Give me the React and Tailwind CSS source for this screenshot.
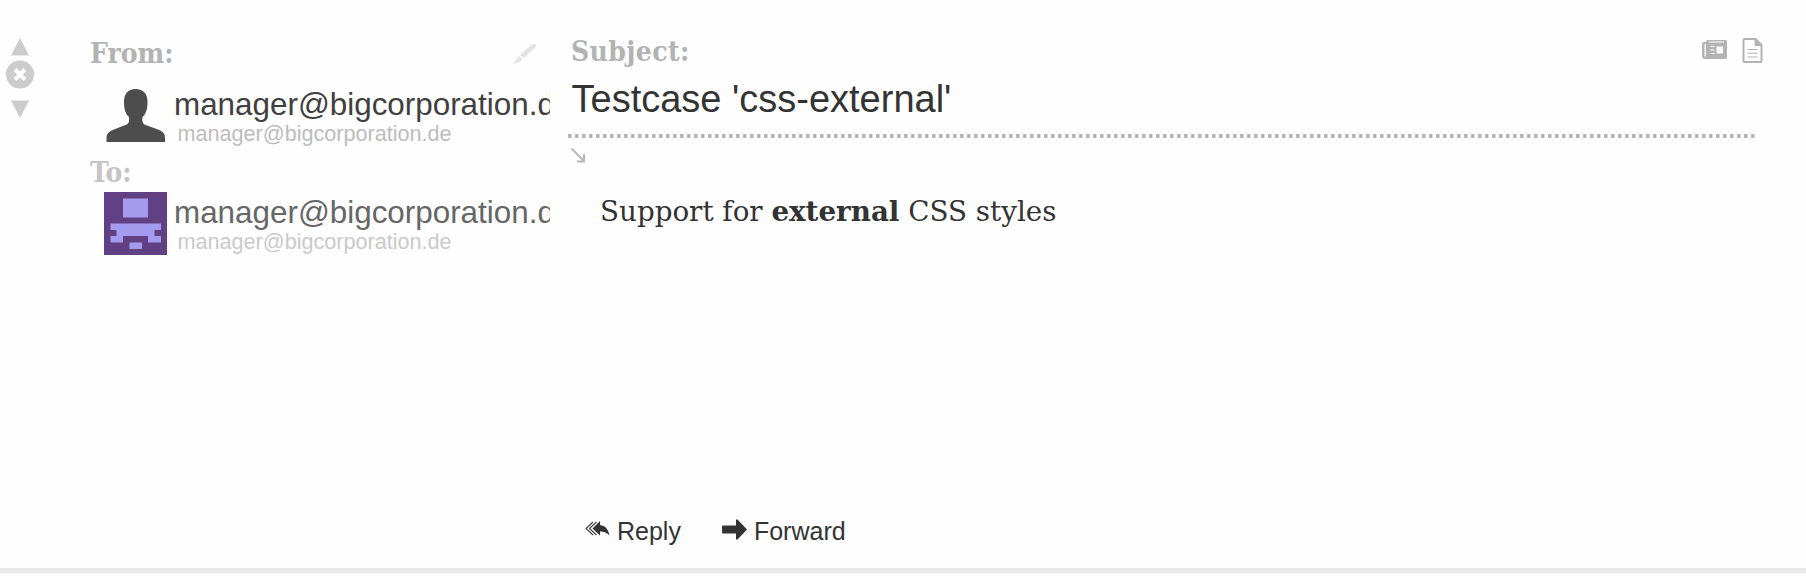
const line = "whitespace-nowrap leading-none";

function Label({ children, className }) {
  return (
    <div className={`font-['DejaVu_Serif_Condensed','DejaVu_Serif',serif] font-bold text-[28px] ${line} ${className}`}>
      {children}
    </div>
  );
}

function UserIcon() {
  return (
    <svg className="h-[63px] w-[63px] shrink-0" viewBox="0 0 63 63" fill="#4d4d4d">
      <path d="M31.500 5C39.500 5 43.500 10 43.500 18C43.500 25 42 30 38.500 33C38 39 39 40 43 41.500L54 45.500C59 47.500 61 49.500 61 54V58H2.500V54C2.500 49.500 5 47.500 10 45.500L20 41.500C24.500 40 25.500 39 25 33C21.500 30 20 25 20 18C20 10 24 5 31.500 5Z" />
    </svg>
  );
}

function Identicon() {
  return (
    <svg className="h-[63px] w-[63px] shrink-0" viewBox="0 0 63 63">
      <path fill="#614184" d="M0 0H63V63H0Z" />
      <path fill="#a49bee" d="M19 6.500H44V25.500H19ZM6.500 31.500H57V38H50.500V44H57V50.500H44V44H19V50.500H6.500V44H12.500V38H6.500ZM25.500 50.500H38V57H25.500Z" />
    </svg>
  );
}

function Contact({ icon, nameClass, mailClass }) {
  return (
    <div className="flex h-[63px]">
      {icon}
      <div className="ml-[7px] min-w-0 flex-1 overflow-hidden">
        <div className={`h-[39px] pt-[5px] text-[31.400px] ${line} ${nameClass}`}>manager@bigcorporation.de</div>
        <div className={`pl-[3.500px] text-[21.600px] ${line} ${mailClass}`}>manager@bigcorporation.de</div>
      </div>
    </div>
  );
}

export default function App() {
  return (
    <div className="flex h-[576px] w-[1806px] flex-col overflow-hidden bg-[#fefefe] font-['Liberation_Sans',sans-serif] text-[#333]">
      <div className="flex h-[568px]">
        <nav className="w-[90px] pl-[5px] pt-[37px]">
          <svg width="30" height="84" viewBox="0 0 30 84" fill="#ccc">
            <path d="M15 1L24 18.500H6ZM6 63.500H24L15 81Z" />
            <circle cx="15" cy="37.500" r="14" />
            <path d="M10 32.500L20 42.500M20 32.500L10 42.500" stroke="#fff" strokeWidth="4" />
          </svg>
        </nav>
        <aside className="w-[460px] pt-[40px]">
          <div className="flex h-[44px] justify-between">
            <Label className="text-[#b3b3b3]">From:</Label>
            <svg className="mr-[13px] mt-[2px]" width="25" height="23" viewBox="0 0 25 23" fill="#e3e3e3">
              <path d="M8 13L20 2.500Q22 1 23.500 2.500T23.500 5.500L12 16ZM7 14L10.500 17Q9 20 1 22Q4 18 7 14Z" />
            </svg>
          </div>
          <div className="pl-[14px]">
            <Contact icon={<UserIcon />} nameClass="text-[#404040]" mailClass="text-[#bdbdbd]" />
          </div>
          <Label className="mt-[12px] h-[33px] text-[#c4c4c4]">To:</Label>
          <div className="pl-[14px]">
            <Contact icon={<Identicon />} nameClass="text-[#666]" mailClass="text-[#cacaca]" />
          </div>
        </aside>
        <main className="flex flex-1 flex-col pl-[18px] pt-[38px]">
          <div className="flex h-[42px] items-start justify-between pl-[3px]">
            <Label className="tracking-[0.400px] text-[#b3b3b3]">Subject:</Label>
            <div className="flex gap-[15px] pr-[43px]">
              <svg width="25" height="26" viewBox="0 0 25 26" fill="#b3b3b3">
                <path fillRule="evenodd" d="M5 2H23Q25 2 25 4V19Q25 21 23 21H3Q0 21 0 18V6Q0 4 2 4H4V3ZM2.500 6V18.500H3.800V6ZM6.500 3.500V4.500H22V3.500ZM14.500 8.500V15.500H21V8.500ZM8.500 8V9H12.500V8ZM8.500 11.500V12.500H12.500V11.500ZM8.500 15V16H12.500V15Z" />
              </svg>
              <svg width="21" height="26" viewBox="0 0 21 26" fill="#b3b3b3">
                <path fillRule="evenodd" d="M2.500 0H14L20.500 6.500V23Q20.500 25 18.500 25H2.500Q0.500 25 0.500 23V2Q0.500 0 2.500 0ZM2.500 2V23H18.500V8H12.500V2Z" />
                <path d="M5.500 11H15.500V12H5.500ZM5.500 14.700H15.500V15.700H5.500ZM5.500 18.400H15.500V19.400H5.500Z" />
              </svg>
            </div>
          </div>
          <h1 className={`h-[54px] pl-[3.500px] text-[38px] ${line}`}>Testcase 'css-external'</h1>
          <div className="h-1 w-[1187px] bg-[repeating-linear-gradient(90deg,#c4c4c4_0px,#b3b3b3_1px,#b3b3b3_3px,transparent_4px,transparent_7px)]" />
          <svg className="ml-[3px] mt-[10px]" width="15" height="15" viewBox="0 0 15 15" fill="none" stroke="#b8b8b8" strokeWidth="2">
            <path d="M0.500 0.500L12.500 12.500M13 6V13.500H6" />
          </svg>
          <p className={`ml-[32px] mt-[35px] h-[321px] font-['DejaVu_Serif',serif] text-[27.750px] ${line}`}>
            Support for <b>external</b> CSS styles
          </p>
          <div className="flex gap-[41px] pl-[17px] text-[25px] leading-none">
            <span className="flex gap-[7px]">
              <svg className="mt-[2px]" width="25" height="18" viewBox="0 0 25 18" fill="#333">
                <path d="M15 0V4Q23 5 24.500 14.500Q20 10 15 10.500V14.500L7.500 7.500Z" />
                <path fill="none" stroke="#444" strokeWidth="1.200" d="M8 1L1 7.500L8 14M11.500 1L4.500 7.500L11.500 14" />
              </svg>
              Reply
            </span>
            <span className="flex gap-[7px]">
              <svg width="25" height="22" viewBox="0 0 25 22" fill="#333">
                <path d="M0 7.500Q0 6.500 1 6.500H14V0.500H15.500L25 10.500L15.500 20.500H14V14.500H1Q0 14.500 0 13.500Z" />
              </svg>
              Forward
            </span>
          </div>
        </main>
      </div>
      <div className="h-[5px] bg-[#e9e9e9]" />
    </div>
  );
}
